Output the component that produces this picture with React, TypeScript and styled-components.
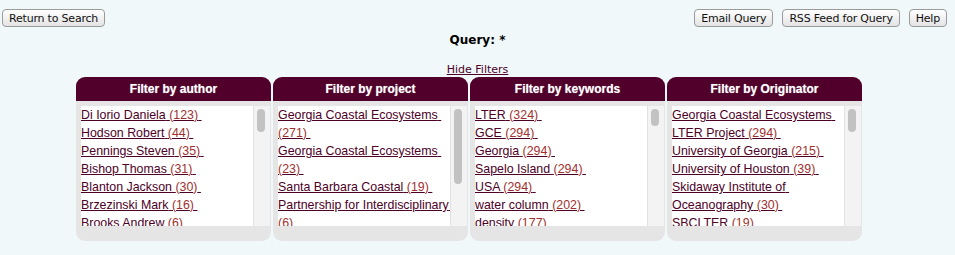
import React from 'react';
import styled, { createGlobalStyle } from 'styled-components';

const GlobalStyle = createGlobalStyle`
  html, body {
    margin: 0;
    padding: 0;
    background: #f0f8fa;
  }
`;

const Page = styled.div`
  width: 955px;
  height: 255px;
  overflow: hidden;
  background: #f0f8fa;
`;

const Toolbar = styled.div`
  display: flex;
  align-items: center;
  padding: 9px 8px 0 2px;
  height: 18px;
`;

const Spacer = styled.div`
  flex: 1;
`;

const Btn = styled.button<{ $gap?: number }>`
  height: 18px;
  margin-left: ${({ $gap }) => $gap ?? 0}px;
  padding: 0 6px;
  font-family: "DejaVu Sans", Verdana, sans-serif;
  font-size: 11px;
  letter-spacing: -0.2px;
  color: #111;
  background: linear-gradient(#ffffff, #f1f1f1 50%, #e4e4e4);
  border: 1px solid #9a9a9a;
  border-radius: 4px;
  line-height: 15px;
`;

const Query = styled.div`
  text-align: center;
  margin-top: 5px;
  font-family: "DejaVu Sans", Verdana, sans-serif;
  font-weight: bold;
  font-size: 12px;
  color: #000;
  line-height: 16px;
`;

const HideRow = styled.div`
  text-align: center;
  margin-top: 13px;
  line-height: 14px;
`;

const HideLink = styled.a`
  font-family: "DejaVu Sans", Verdana, sans-serif;
  font-size: 11px;
  color: #4d0027;
  text-decoration: underline;
`;

const Panels = styled.div`
  display: flex;
  gap: 2px;
  padding-left: 76px;
`;

const Panel = styled.div`
  width: 195px;
  background: #e5e5e5;
  border-radius: 9px;
  overflow: hidden;
`;

const Header = styled.div`
  height: 24px;
  background: #50002a;
  color: #fff;
  font-family: "Liberation Sans", Arial, sans-serif;
  font-weight: bold;
  font-size: 12px;
  line-height: 24px;
  text-align: center;
  text-shadow: 0 0 1px rgba(255, 255, 255, 0.6);
`;

const ListBox = styled.div`
  display: flex;
  height: 120px;
  margin: 5px 1px 15px 5px;
  background: #fff;
`;

const Items = styled.div`
  flex: 1;
  overflow: hidden;
  font-family: "Liberation Sans", Arial, sans-serif;
  font-size: 12.4px;
  line-height: 18px;
`;

const Item = styled.a`
  display: block;
  color: #4d0027;
  text-decoration: underline;
  white-space: pre-wrap;
`;

const Count = styled.span`
  color: #a0302e;
`;

const Track = styled.div`
  width: 13px;
  background: #f3f3f3;
  border-left: 1px solid #e2e2e2;
  padding: 3px 0 0 3px;
  box-sizing: content-box;
`;

const Thumb = styled.div<{ $len: number }>`
  width: 8px;
  height: ${({ $len }) => $len}px;
  border-radius: 4px;
  background: #c2c2c2;
`;

type Entry = [string, number];

const filters: { title: string; thumb: number; items: Entry[] }[] = [
  {
    title: 'Filter by author',
    thumb: 23,
    items: [
      ['Di Iorio Daniela', 123],
      ['Hodson Robert', 44],
      ['Pennings Steven', 35],
      ['Bishop Thomas', 31],
      ['Blanton Jackson', 30],
      ['Brzezinski Mark', 16],
      ['Brooks Andrew', 6],
    ],
  },
  {
    title: 'Filter by project',
    thumb: 75,
    items: [
      ['Georgia Coastal Ecosystems', 271],
      ['Georgia Coastal Ecosystems', 23],
      ['Santa Barbara Coastal', 19],
      ['Partnership for Interdisciplinary', 6],
    ],
  },
  {
    title: 'Filter by keywords',
    thumb: 17,
    items: [
      ['LTER', 324],
      ['GCE', 294],
      ['Georgia', 294],
      ['Sapelo Island', 294],
      ['USA', 294],
      ['water column', 202],
      ['density', 177],
    ],
  },
  {
    title: 'Filter by Originator',
    thumb: 23,
    items: [
      ['Georgia Coastal Ecosystems LTER Project', 294],
      ['University of Georgia', 215],
      ['University of Houston', 39],
      ['Skidaway Institute of Oceanography', 30],
      ['SBCLTER', 19],
    ],
  },
];

export default function App() {
  return (
    <Page>
      <GlobalStyle />
      <Toolbar>
        <Btn>Return to Search</Btn>
        <Spacer />
        <Btn>Email Query</Btn>
        <Btn $gap={9}>RSS Feed for Query</Btn>
        <Btn $gap={9}>Help</Btn>
      </Toolbar>
      <Query>Query: *</Query>
      <HideRow>
        <HideLink href="#">Hide Filters</HideLink>
      </HideRow>
      <Panels>
        {filters.map((f) => (
          <Panel key={f.title}>
            <Header>{f.title}</Header>
            <ListBox>
              <Items>
                {f.items.map(([name, n], i) => (
                  <Item key={i} href="#">
                    {name} <Count>({n})</Count>{' '}
                  </Item>
                ))}
              </Items>
              <Track>
                <Thumb $len={f.thumb} />
              </Track>
            </ListBox>
          </Panel>
        ))}
      </Panels>
    </Page>
  );
}
